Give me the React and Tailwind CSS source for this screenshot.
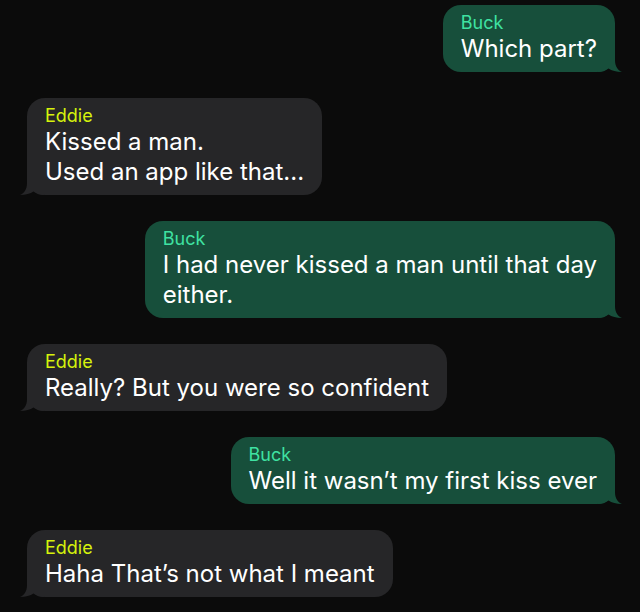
import React from "react";

const messages = [
  { from: "Buck", lines: ["Which part?"] },
  { from: "Eddie", lines: ["Kissed a man.", "Used an app like that..."] },
  { from: "Buck", lines: ["I had never kissed a man until that day", "either."] },
  { from: "Eddie", lines: ["Really? But you were so confident"] },
  { from: "Buck", lines: ["Well it wasn\u2019t my first kiss ever"] },
  { from: "Eddie", lines: ["Haha That\u2019s not what I meant"] },
];

function Tail({ mine }) {
  return (
    <svg
      width="26"
      height="25"
      viewBox="0 0 26 25"
      className={
        mine
          ? "absolute -right-[9px] bottom-0"
          : "absolute -left-[9px] bottom-0 -scale-x-100"
      }
    >
      <path
        d="M0 0 H17 V13 C17 19 19.5 23 24 25 C18.5 25 13.5 23.5 10.5 21.5 C7.5 24 4 25 0 25 Z"
        fill={mine ? "#174f3b" : "#262628"}
      />
    </svg>
  );
}

function Bubble({ msg }) {
  const mine = msg.from === "Buck";
  return (
    <div className={mine ? "flex justify-end pr-[25px]" : "flex justify-start pl-[27px]"}>
      <div
        className={
          "relative rounded-[18px] px-[18px] pt-[7px] pb-[8px] " +
          (mine ? "bg-[#174f3b]" : "bg-[#262628]")
        }
      >
        <Tail mine={mine} />
        <div
          className={
            "relative text-[18px] leading-[22px] " +
            (mine ? "text-[#3fe2a2]" : "text-[#d6f20c]")
          }
        >
          {msg.from}
        </div>
        {msg.lines.map((line, i) => (
          <div key={i} className="relative whitespace-nowrap text-[24px] leading-[30px] text-white">
            {line}
          </div>
        ))}
      </div>
    </div>
  );
}

export default function App() {
  return (
    <div
      className="min-h-screen bg-[#0b0b0b] pt-[5px] flex flex-col gap-[26px]"
      style={{ fontFamily: "Inter, 'Noto Sans', sans-serif" }}
    >
      {messages.map((m, i) => (
        <Bubble key={i} msg={m} />
      ))}
    </div>
  );
}
